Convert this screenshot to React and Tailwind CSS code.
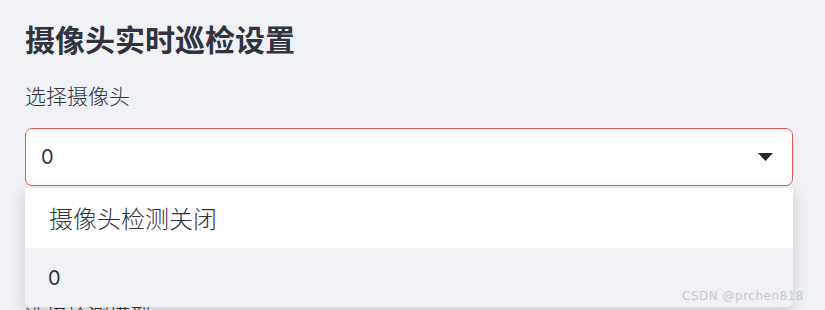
export default function App() {
  const font = { fontFamily: '"Noto Sans CJK SC", "Noto Sans", sans-serif' }
  const num = { fontFamily: '"Inter", "Noto Sans CJK SC", sans-serif' }
  return (
    <div className="relative w-[825px] h-[310px] overflow-hidden bg-[#f0f2f6] text-[#31333f]" style={font}>
      <div className="pl-[25px] pr-[32px] pt-[17px]">
        <h2 className="text-[30px] font-bold leading-[42px]">摄像头实时巡检设置</h2>
        <div className="mt-[23px] text-[21px] font-light leading-[26px]">选择摄像头</div>
        <div className="relative mt-[20px]">
          <div className="flex h-[58px] items-center justify-between rounded-[7px] border border-[#e05a5c] bg-white pl-[15px] pr-[19px]">
            <span className="text-[20px]" style={num}>0</span>
            <svg width="15" height="8" viewBox="0 0 15 8">
              <path d="M0 0 L15 0 L7.5 8 Z" fill="#262730" />
            </svg>
          </div>
          <div className="mt-[116px] text-[21px] font-light leading-[26px]">选择检测模型</div>
          <div className="absolute left-0 right-0 top-[60px] overflow-hidden rounded-b-[7px] bg-white shadow-[0_4px_16px_rgba(0,0,0,0.16)]">
            <div className="flex h-[60px] items-center pl-[24px] text-[24px] font-light">摄像头检测关闭</div>
            <div className="flex h-[59px] items-center bg-[#f0f2f6] pl-[23px] text-[20px]" style={num}>0</div>
          </div>
        </div>
      </div>
      <div className="absolute left-[682px] top-[287px] text-[12px] tracking-[0.5px] text-[#c8c9cc]" style={{ fontFamily: '"DejaVu Sans", sans-serif' }}>
        CSDN @prchen818
      </div>
    </div>
  )
}
